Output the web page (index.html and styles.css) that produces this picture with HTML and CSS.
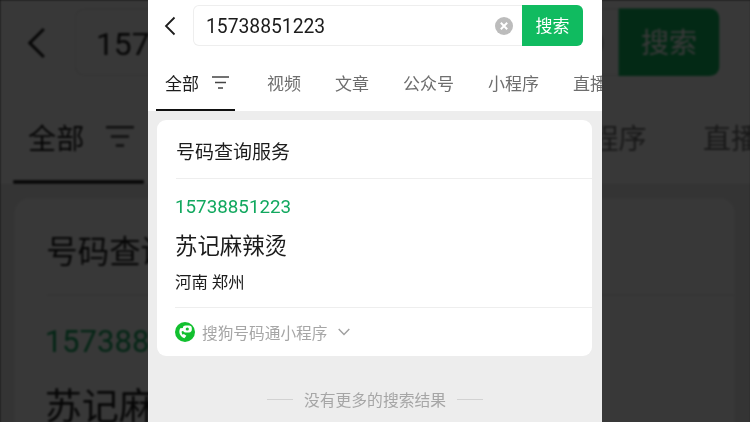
FILE: index.html
```html
<!DOCTYPE html>
<html lang="zh-CN">
<head>
    <meta charset="UTF-8">
    <meta name="viewport" content="width=device-width, initial-scale=1.0">
    <title>号码查询服务</title>
    <link rel="stylesheet" href="styles.css">
</head>
<body>
    <div class="page">
        <!-- Blurred, darkened copy of the panel filling the frame -->
        <div class="backdrop">
            <div class="panel">
                <div class="header">
                    <div class="search-row">
                        <svg class="back-icon" viewBox="0 0 12 20"><path d="M10.500 1.500 2 10l8.500 8.500" /></svg>
                        <div class="search-box">
                            <span class="search-text">15738851223</span>
                            <svg class="clear-icon" viewBox="0 0 18 18"><circle cx="9" cy="9" r="9" /><path d="M5.800 5.800l6.400 6.400M12.200 5.800l-6.400 6.400" /></svg>
                            <div class="search-button">搜索</div>
                        </div>
                    </div>
                    <div class="tabs">
                        <div class="tab active">全部<svg class="filter-icon" viewBox="0 0 17 13"><path d="M0 1h17M3 6.500h11M6 12h5" /></svg></div>
                        <div class="tab">视频</div>
                        <div class="tab">文章</div>
                        <div class="tab">公众号</div>
                        <div class="tab">小程序</div>
                        <div class="tab">直播</div>
                    </div>
                </div>
                <div class="card">
                    <div class="card-title">号码查询服务</div>
                    <div class="card-body">
                        <div class="phone">15738851223</div>
                        <div class="name">苏记麻辣烫</div>
                        <div class="region">河南 郑州</div>
                    </div>
                </div>
            </div>
        </div>
        <div class="overlay"></div>

        <div class="panel front">
            <div class="header">
                <div class="search-row">
                    <svg class="back-icon" viewBox="0 0 12 20"><path d="M10.500 1.500 2 10l8.500 8.500" /></svg>
                    <div class="search-box">
                        <span class="search-text">15738851223</span>
                        <svg class="clear-icon" viewBox="0 0 18 18"><circle cx="9" cy="9" r="9" /><path d="M5.800 5.800l6.400 6.400M12.200 5.800l-6.400 6.400" /></svg>
                        <div class="search-button">搜索</div>
                    </div>
                </div>
                <div class="tabs">
                    <div class="tab active">全部<svg class="filter-icon" viewBox="0 0 17 13"><path d="M0 1h17M3 6.500h11M6 12h5" /></svg></div>
                    <div class="tab">视频</div>
                    <div class="tab">文章</div>
                    <div class="tab">公众号</div>
                    <div class="tab">小程序</div>
                    <div class="tab">直播</div>
                </div>
            </div>
            <div class="card">
                <div class="card-title">号码查询服务</div>
                <div class="card-body">
                    <div class="phone">15738851223</div>
                    <div class="name">苏记麻辣烫</div>
                    <div class="region">河南 郑州</div>
                </div>
                <div class="card-footer">
                    <svg class="logo-icon" viewBox="0 0 20 20">
                        <circle class="logo-disc" cx="10" cy="10" r="10" />
                        <path class="logo-phone" d="M5.200 6.200c-2 3.800-.4 8.200 4.200 10l2-2.500-2.600-1.700-1.100.8c-.9-1.100-1.200-2.300-.9-3.500l1.300-.3.100-3z" />
                        <rect class="logo-bubble" x="7.800" y="3.600" width="9" height="6.800" rx="2.800" />
                        <circle class="logo-dot" cx="12.300" cy="7" r="1.600" />
                    </svg>
                    <span class="source">搜狗号码通小程序</span>
                    <svg class="more-icon" viewBox="0 0 12 8"><path d="M.7.900 6 6.500 11.300.900" /></svg>
                </div>
            </div>
            <div class="end-note">
                <span class="end-line"></span>
                <span>没有更多的搜索结果</span>
                <span class="end-line"></span>
            </div>
        </div>
    </div>
</body>
</html>
```

FILE: styles.css
```css
:root {
    --green: #10bb60;
    --green-text: #12a85f;
    --text-primary: #1c1c1c;
    --text-secondary: #6e6e6e;
    --text-muted: #a6a6a6;
    --border-color: #eeeeee;
    --bg-panel: #ededed;
}

* {
    box-sizing: border-box;
}

body {
    margin: 0;
    font-family: Roboto, "Noto Sans CJK SC", sans-serif;
    color: var(--text-primary);
}

.page {
    position: relative;
    width: 750px;
    height: 422px;
    overflow: hidden;
    background: #383838;
}

.backdrop {
    position: absolute;
    top: 0;
    left: 0;
    transform: scale(1.654);
    transform-origin: 0 0;
    filter: blur(0.6px);
}

.overlay {
    position: absolute;
    inset: 0;
    background: rgba(0, 0, 0, 0.78);
}

.panel {
    width: 454px;
    height: 422px;
    overflow: hidden;
    background: var(--bg-panel);
}

.front {
    position: relative;
    margin-left: 148px;
    filter: blur(0.3px);
}

.header {
    height: 111px;
    background: #ffffff;
}

.search-row {
    display: flex;
    align-items: center;
    height: 46px;
    padding: 5px 19px 0 16px;
}

.back-icon {
    flex: none;
    width: 12px;
    height: 20px;
    margin-right: 17px;
    fill: none;
    stroke: #1c1c1c;
    stroke-width: 1.800;
}

.search-box {
    flex: 1;
    display: flex;
    align-items: center;
    height: 41px;
    padding-left: 13px;
    border-radius: 6px;
    box-shadow: inset 0 0 0 1px var(--border-color);
    overflow: hidden;
}

.search-text {
    flex: 1;
    padding-top: 2px;
    font-size: 19.300px;
}

.clear-icon {
    flex: none;
    width: 18px;
    height: 18px;
    margin-right: 9px;
}

.clear-icon circle {
    fill: #bcbcbc;
}

.clear-icon path {
    fill: none;
    stroke: #ffffff;
    stroke-width: 2;
}

.search-button {
    flex: none;
    width: 61px;
    height: 41px;
    background: var(--green);
    color: #ffffff;
    font-size: 17px;
    line-height: 42px;
    text-align: center;
}

.tabs {
    display: flex;
    gap: 34px;
    height: 65px;
    padding-left: 8px;
    white-space: nowrap;
}

.tab {
    display: flex;
    flex: none;
    align-items: center;
    height: 63px;
    padding-top: 9px;
    font-size: 17px;
    color: var(--text-secondary);
}

.tab.active {
    width: 79px;
    height: 65px;
    margin-right: -2px;
    padding: 9px 0 0 9px;
    border-bottom: 2px solid #111111;
    color: var(--text-primary);
}

.filter-icon {
    width: 17px;
    height: 13px;
    margin-left: 13px;
    fill: none;
    stroke: #444444;
    stroke-width: 1.500;
}

.card {
    margin: 9px 10px 0 9px;
    background: #ffffff;
    border-radius: 9px;
}

.card-title {
    height: 59px;
    margin-left: 19px;
    font-size: 19px;
    line-height: 66px;
    border-bottom: 1px solid var(--border-color);
}

.card-body {
    height: 128px;
    padding: 13px 0 0 19px;
}

.phone {
    height: 30px;
    margin-left: -1px;
    font-size: 18.800px;
    line-height: 30px;
    color: var(--green-text);
}

.name {
    height: 48px;
    margin-left: -1px;
    font-size: 22.400px;
    line-height: 48px;
}

.region {
    height: 26px;
    margin-left: -1px;
    font-size: 16.400px;
    line-height: 26px;
}

.card-footer {
    display: flex;
    align-items: center;
    height: 49px;
    margin-left: 18px;
    border-top: 1px solid var(--border-color);
}

.logo-icon {
    flex: none;
    width: 20px;
    height: 20px;
    margin-right: 7px;
}

.logo-disc {
    fill: #12c02f;
}

.logo-phone,
.logo-bubble {
    fill: #ffffff;
}

.logo-dot {
    fill: #12c02f;
}

.source {
    font-size: 15.700px;
    color: var(--text-muted);
}

.more-icon {
    width: 12px;
    height: 8px;
    margin-left: 10px;
    fill: none;
    stroke: #a0a0a0;
    stroke-width: 1.400;
}

.end-note {
    display: flex;
    align-items: center;
    justify-content: center;
    gap: 11px;
    margin-top: 32px;
    font-size: 15.800px;
    color: var(--text-muted);
}

.end-line {
    width: 26px;
    height: 1px;
    background: #d2d2d2;
}
```
